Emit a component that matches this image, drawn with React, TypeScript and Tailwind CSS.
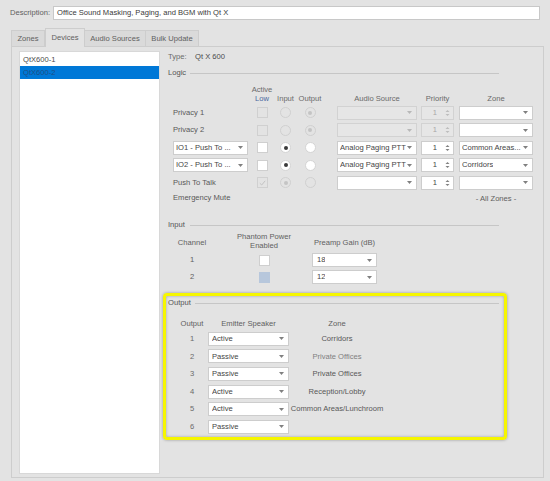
import React from "react";
import clsx from "clsx";

function Arrow({ light }: { light?: boolean }) {
  return (
    <svg width="5" height="3" viewBox="0 0 5 3" className="shrink-0">
      <path d="M0 0h5L2.5 3z" fill={light ? "#b8b8b8" : "#808080"} />
    </svg>
  );
}

function Combo({ className, text, disabled }: { className?: string; text?: string; disabled?: boolean }) {
  return (
    <div
      className={clsx(
        "flex h-[14px] items-center justify-between border pl-[2px] pr-[4px]",
        disabled ? "border-[#d2d2d2] bg-[#e6e6e6]" : "border-[#cdcdcd] bg-white text-[#454545]",
        className
      )}
    >
      <span className="truncate whitespace-nowrap">{text}</span>
      <Arrow light={disabled} />
    </div>
  );
}

function Spinner({ disabled }: { disabled?: boolean }) {
  const c = disabled ? "#bdbdbd" : "#808080";
  return (
    <div
      className={clsx(
        "flex h-[14px] w-[33px] items-center justify-end border pr-[3px]",
        disabled ? "border-[#d2d2d2] bg-[#e6e6e6] text-[#a8a8a8]" : "border-[#cdcdcd] bg-white text-[#454545]"
      )}
    >
      <span className="mr-[8px]">1</span>
      <svg width="5" height="8" viewBox="0 0 5 8">
        <path d="M0.5 3L2.5 1L4.5 3z" fill={c} />
        <path d="M0.5 5L2.5 7L4.5 5z" fill={c} />
      </svg>
    </div>
  );
}

function Check({ variant }: { variant: "on" | "off" | "checkedOff" | "blue" }) {
  if (variant === "blue") return <div className="h-[11px] w-[11px] bg-[#b7c7dc]" />;
  if (variant === "on") return <div className="h-[11px] w-[11px] border border-[#cfcfcf] bg-white" />;
  return (
    <div className="flex h-[11px] w-[11px] items-center justify-center border border-[#d0d0d0]">
      {variant === "checkedOff" && (
        <svg width="7" height="6" viewBox="0 0 7 6">
          <path d="M0.8 3.2L2.7 5L6.2 0.8" stroke="#c2c2c2" strokeWidth="1" fill="none" />
        </svg>
      )}
    </div>
  );
}

function Radio({ enabled, dot }: { enabled?: boolean; dot?: boolean }) {
  return (
    <div
      className={clsx(
        "flex h-[11px] w-[11px] items-center justify-center rounded-full border",
        enabled ? "border-[#d4d4d4] bg-white" : "border-[#d0d0d0]"
      )}
    >
      {dot && <div className={clsx("h-[4px] w-[4px] rounded-full", enabled ? "bg-[#3a3a3a]" : "bg-[#c4c4c4]")} />}
    </div>
  );
}

type LogicRow = {
  label?: string;
  combo?: string;
  check: "on" | "off" | "checkedOff";
  inEnabled: boolean;
  inDot: boolean;
  outEnabled: boolean;
  outDot: boolean;
  audio?: string;
  audioDisabled?: boolean;
  spinDisabled?: boolean;
  zone?: string;
};

const logicRows: LogicRow[] = [
  { label: "Privacy 1", check: "off", inEnabled: false, inDot: false, outEnabled: false, outDot: true, audioDisabled: true, spinDisabled: true, zone: "" },
  { label: "Privacy 2", check: "off", inEnabled: false, inDot: false, outEnabled: false, outDot: true, audioDisabled: true, spinDisabled: true, zone: "" },
  { combo: "IO1 - Push To ...", check: "on", inEnabled: true, inDot: true, outEnabled: true, outDot: false, audio: "Analog Paging PTT", zone: "Common Areas..." },
  { combo: "IO2 - Push To ...", check: "on", inEnabled: true, inDot: true, outEnabled: true, outDot: false, audio: "Analog Paging PTT", zone: "Corridors" },
  { label: "Push To Talk", check: "checkedOff", inEnabled: false, inDot: true, outEnabled: false, outDot: false, audio: "", zone: "" },
];

const outputs = [
  { n: "1", mode: "Active", zone: "Corridors", light: false },
  { n: "2", mode: "Passive", zone: "Private Offices", light: true },
  { n: "3", mode: "Passive", zone: "Private Offices", light: false },
  { n: "4", mode: "Active", zone: "Reception/Lobby", light: false },
  { n: "5", mode: "Active", zone: "Common Areas/Lunchroom", light: false },
  { n: "6", mode: "Passive", zone: "", light: false },
];

function GroupHeader({ label, labelW, lineW }: { label: string; labelW: string; lineW: string }) {
  return (
    <div className="flex h-[10px] items-center">
      <span className={clsx("text-[#555]", labelW)}>{label}</span>
      <div className={clsx("h-px bg-[#c6c6c6]", lineW)} />
    </div>
  );
}

export default function App() {
  return (
    <div className="h-[481px] w-[550px] overflow-hidden bg-[#e3e3e3] font-['Liberation_Sans',Arial,sans-serif] text-[7.6px] leading-none text-[#606060]">
      {/* Description */}
      <div className="flex items-center pl-[10px] pr-[10px] pt-[6px]">
        <span className="w-[43px]">Description:</span>
        <div className="flex h-[14px] flex-1 items-center border border-[#c8c8c8] bg-white pl-[3px] text-[#3a3a3a]">
          Office Sound Masking, Paging, and BGM with Qt X
        </div>
      </div>

      {/* Tabs */}
      <div className="ml-[11px] mt-[8px] flex h-[18px] items-end">
        <div className="flex h-[16px] w-[34px] items-center justify-center border border-b-0 border-[#cdcdcd] bg-[#dadada]">Zones</div>
        <div className="relative z-10 -mb-px flex h-[19px] w-[40px] items-center justify-center border border-b-0 border-[#cdcdcd] bg-[#e3e3e3] pb-px">Devices</div>
        <div className="flex h-[16px] w-[61px] items-center justify-center border border-b-0 border-l-0 border-[#cdcdcd] bg-[#dadada]">Audio Sources</div>
        <div className="flex h-[16px] w-[53px] items-center justify-center border border-b-0 border-l-0 border-[#cdcdcd] bg-[#dadada]">Bulk Update</div>
      </div>

      {/* Panel */}
      <div className="ml-[11px] flex h-[432px] w-[533px] border border-[#cdcdcd]">
        {/* Device list */}
        <div className="ml-[7px] mt-[4px] h-[423px] w-[141px] border border-[#d8d8d8] bg-white pt-[1px]">
          <div className="flex h-[13px] items-center pl-[3px] text-[#4a4a4a]">QtX600-1</div>
          <div className="flex h-[13px] items-center bg-[#0078d7] pl-[3px] text-[#1d4f86]">QtX600-2</div>
        </div>

        {/* Right content */}
        <div className="flex flex-col pl-[8px] pt-[5px]">
          <div className="flex h-[10px] items-center">
            <span className="w-[27px] text-[#6a6a6a]">Type:</span>
            <span className="text-[#4a4a4a]">Qt X 600</span>
          </div>

          <div className="mt-[6px]">
            <GroupHeader label="Logic" labelW="w-[22px]" lineW="w-[309px]" />
          </div>

          {/* Logic table */}
          <div className="mt-[7px] pl-[5px]">
            <div className="flex h-[9px] items-center">
              <div className="w-[77px]" />
              <div className="flex w-[24px] justify-center text-[#6a6a6a]">Active</div>
            </div>
            <div className="flex h-[9px] items-center text-[#6a6a6a]">
              <div className="w-[77px]" />
              <div className="flex w-[24px] justify-center text-[#4a68a0]">Low</div>
              <div className="flex w-[23px] justify-center">Input</div>
              <div className="flex w-[26px] justify-center">Output</div>
              <div className="ml-[14px] flex w-[80px] justify-center">Audio Source</div>
              <div className="ml-[4px] flex w-[33px] justify-center">Priority</div>
              <div className="ml-[5px] flex w-[74px] justify-center">Zone</div>
            </div>
            <div className="mt-px">
              {logicRows.map((r, i) => (
                <div key={i} className="flex h-[17.5px] items-center">
                  <div className="w-[77px]">
                    {r.combo ? <Combo className="w-[75px]" text={r.combo} /> : <span className="text-[#585858]">{r.label}</span>}
                  </div>
                  <div className="flex w-[24px] justify-center">
                    <Check variant={r.check} />
                  </div>
                  <div className="flex w-[23px] justify-center">
                    <Radio enabled={r.inEnabled} dot={r.inDot} />
                  </div>
                  <div className="flex w-[26px] justify-center">
                    <Radio enabled={r.outEnabled} dot={r.outDot} />
                  </div>
                  <Combo className="ml-[14px] w-[80px]" text={r.audio} disabled={r.audioDisabled} />
                  <div className="ml-[4px]">
                    <Spinner disabled={r.spinDisabled} />
                  </div>
                  <Combo className="ml-[5px] w-[74px]" text={r.zone} />
                </div>
              ))}
              <div className="flex h-[12.5px] items-center">
                <div className="w-[77px] whitespace-nowrap text-[#585858]">Emergency Mute</div>
                <div className="w-[73px]" />
                <div className="ml-[14px] w-[80px]" />
                <div className="ml-[4px] w-[33px]" />
                <div className="ml-[5px] flex w-[74px] justify-center pt-[3px]">- All Zones -</div>
              </div>
            </div>
          </div>

          {/* Input */}
          <div className="mt-[16px]">
            <GroupHeader label="Input" labelW="w-[22px]" lineW="w-[309px]" />
          </div>
          <div className="mt-[2px] flex items-center">
            <div className="mt-[3px] flex w-[48px] justify-center">Channel</div>
            <div className="flex w-[96px] flex-col items-center">
              <div className="flex h-[9px] items-center">Phantom Power</div>
              <div className="flex h-[9px] items-center">Enabled</div>
            </div>
            <div className="mt-[3px] flex w-[65px] justify-center whitespace-nowrap">Preamp Gain (dB)</div>
          </div>
          <div className="mt-[1.5px]">
            {[
              { c: "1", v: "18", check: "on" as const },
              { c: "2", v: "12", check: "blue" as const },
            ].map((r) => (
              <div key={r.c} className="flex h-[17px] items-center">
                <div className="flex w-[48px] justify-center">{r.c}</div>
                <div className="flex w-[96px] justify-center">
                  <Check variant={r.check} />
                </div>
                <Combo className="w-[65px] pl-[4px]" text={r.v} />
              </div>
            ))}
          </div>

          {/* Output (highlighted) */}
          <div className="-ml-[5px] mt-[7.5px] h-[147px] w-[344px] rounded-[4px] border-[3px] border-[#f6f600] shadow-[0_0_3px_rgba(0,0,0,0.35),inset_0_0_3px_rgba(0,0,0,0.3)]">
            <div className="mt-[2px] pl-[2px]">
              <GroupHeader label="Output" labelW="w-[27px]" lineW="w-[304px]" />
            </div>
            <div className="mt-[11px] flex h-[10px] items-center pl-[10px]">
              <div className="flex w-[32px] justify-center">Output</div>
              <div className="flex w-[81px] justify-center whitespace-nowrap">Emitter Speaker</div>
              <div className="flex w-[96px] justify-center">Zone</div>
            </div>
            <div className="mt-px pl-[10px]">
              {outputs.map((o) => (
                <div key={o.n} className="flex h-[17.6px] items-center">
                  <div className="flex w-[32px] justify-center text-[#6a6a6a]">{o.n}</div>
                  <Combo className="w-[81px] pl-[3px]" text={o.mode} />
                  <div className={clsx("flex w-[96px] justify-center whitespace-nowrap", o.light ? "text-[#808080]" : "text-[#585858]")}>{o.zone}</div>
                </div>
              ))}
            </div>
          </div>
        </div>
      </div>
    </div>
  );
}
